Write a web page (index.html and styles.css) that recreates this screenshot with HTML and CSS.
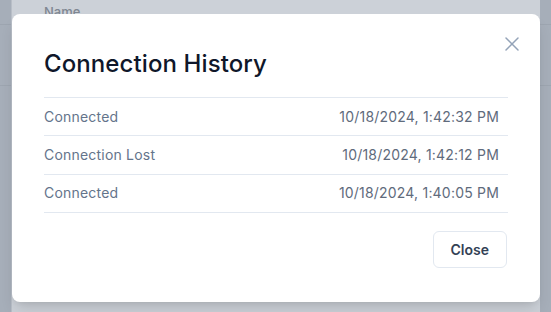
FILE: index.html
```html
<!DOCTYPE html>
<html lang="en">
<head>
<meta charset="utf-8">
<title>Connection History</title>
<link rel="stylesheet" href="styles.css">
</head>
<body>
<div class="page">
  <div class="strip strip-left">
    <div class="strip-row first"></div>
    <div class="strip-row"></div>
  </div>
  <div class="main">
    <div class="table-head">Name</div>
  </div>
  <div class="strip strip-right">
    <div class="strip-row first"></div>
    <div class="strip-row"></div>
  </div>
</div>

<div class="modal" role="dialog" aria-labelledby="modal-title">
  <button class="icon-close" aria-label="Close">
    <svg width="24" height="24" viewBox="0 0 24 24" fill="none" stroke="currentColor" stroke-width="1.5" stroke-linecap="round" stroke-linejoin="round"><path d="M18 6 6 18"/><path d="m6 6 12 12"/></svg>
  </button>
  <h2 class="modal-title" id="modal-title">Connection History</h2>
  <div class="history">
    <div class="history-row"><span class="event">Connected</span><span class="time">10/18/2024, 1:42:32 PM</span></div>
    <div class="history-row"><span class="event">Connection Lost</span><span class="time">10/18/2024, 1:42:12 PM</span></div>
    <div class="history-row"><span class="event">Connected</span><span class="time">10/18/2024, 1:40:05 PM</span></div>
  </div>
  <div class="modal-footer">
    <button class="btn">Close</button>
  </div>
</div>
</body>
</html>
```

FILE: styles.css
```css
* { box-sizing: border-box; }

html, body {
  margin: 0;
  padding: 0;
}

body {
  font-family: "Inter", "Noto Sans", sans-serif;
  background: #a7afba;
  width: 551px;
  height: 312px;
  overflow: hidden;
  position: relative;
}

.page {
  display: flex;
  height: 312px;
}

.strip {
  background: #a6aeb9;
}

.strip-left {
  width: 12px;
  border-right: 1px solid #b8bec7;
}

.strip-right {
  width: 11px;
}

.strip-row {
  height: 61px;
  border-bottom: 1px solid #9da5b0;
}

.strip-row.first {
  height: 25px;
}

.main {
  flex: 1;
  background: #ccd1d8;
}

.table-head {
  padding: 4px 0 0 32px;
  font-size: 13px;
  line-height: 16px;
  font-weight: 500;
  color: #7f8792;
}

.modal {
  position: absolute;
  left: 12px;
  top: 14px;
  width: 528px;
  background: #ffffff;
  border-radius: 8px;
  padding: 34px 32px 34px;
  box-shadow: 0 10px 15px -3px rgba(0, 0, 0, 0.12), 0 4px 6px -4px rgba(0, 0, 0, 0.1);
}

.icon-close {
  position: absolute;
  top: 18px;
  right: 16px;
  width: 24px;
  height: 24px;
  padding: 0;
  border: 0;
  background: none;
  color: #94a3b8;
  display: flex;
}

.modal-title {
  margin: 0 0 17px;
  font-size: 24px;
  line-height: 32px;
  font-weight: 500;
  letter-spacing: 0.1px;
  color: #0f172a;
}

.history {
  border-top: 1px solid #e2e8f0;
}

.history-row {
  display: flex;
  justify-content: space-between;
  align-items: center;
  height: 38.3px;
  padding-bottom: 1px;
  border-bottom: 1px solid #e2e8f0;
  font-size: 14px;
  letter-spacing: 0.2px;
  color: #64748b;
}

.time {
  padding-right: 9px;
  color: #5f6b7c;
}

.modal-footer {
  display: flex;
  justify-content: flex-end;
  margin-top: 18px;
  padding-right: 1px;
}

.btn {
  font-family: inherit;
  height: 37px;
  padding: 0 17px;
  font-size: 14px;
  font-weight: 600;
  color: #334155;
  background: #ffffff;
  border: 1px solid #e2e8f0;
  border-radius: 6px;
}
```
